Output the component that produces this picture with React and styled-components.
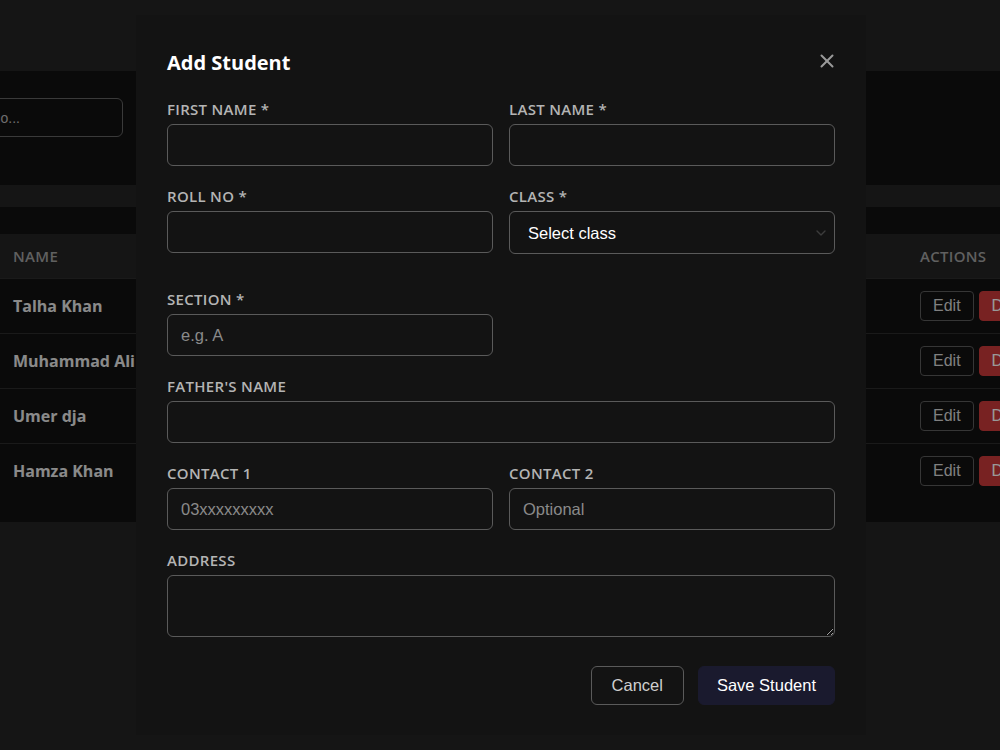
import React from 'react';
import styled, { createGlobalStyle } from 'styled-components';
import { X, ChevronDown } from 'lucide-react';

// --- Global ---
const GlobalStyle = createGlobalStyle`
  * { box-sizing: border-box; }
  html, body {
    margin: 0;
    padding: 0;
    background: #232323;
    overflow: hidden;
    font-family: "Open Sans", "Noto Sans", sans-serif;
  }
`;

// --- Background page (dimmed behind the modal) ---
const Page = styled.div`
  width: 1256px;
  height: 750px;
  margin-left: -190px;
  padding-top: 71px;
  display: flex;
  flex-direction: column;
  gap: 22px;
`;

const SearchCard = styled.div`
  height: 114px;
  background: #111;
  padding: 27px 24px;
  display: flex;
  align-items: flex-start;
`;

const SearchInput = styled.input`
  width: 289px;
  height: 39px;
  padding: 0 13px;
  background: transparent;
  border: 1px solid #616161;
  border-radius: 6px;
  color: #eee;
  font-family: "Liberation Sans", Arial, sans-serif;
  font-size: 14px;

  &::placeholder {
    color: #b8b8b8;
  }
`;

const TableCard = styled.div`
  background: #111;
  padding: 27px 0 23px;
`;

const Row = styled.div`
  display: grid;
  grid-template-columns: 190px 300px 200px 200px 207px 159px;
  align-items: center;
  height: ${(p) => (p.$head ? '45px' : '55px')};
  background: ${(p) => (p.$head ? '#242424' : 'transparent')};
  border-bottom: 1px solid ${(p) => (p.$last ? 'transparent' : '#2c2c2c')};
`;

const Cell = styled.div`
  padding: 0 13px;
  white-space: nowrap;
  overflow: hidden;
  color: ${(p) => (p.$head ? '#a0a0a0' : '#e6e6e6')};
  font-size: ${(p) => (p.$head ? '15px' : '16px')};
  font-weight: ${(p) => (p.$head ? 600 : p.$bold ? 700 : 400)};
  letter-spacing: ${(p) => (p.$head ? '0.3px' : '0')};
  text-transform: ${(p) => (p.$head ? 'uppercase' : 'none')};
  display: flex;
  gap: 5px;
`;

const RowButton = styled.button`
  height: 30px;
  padding: 0 12px;
  border-radius: 4px;
  font-family: "Liberation Sans", Arial, sans-serif;
  font-size: 16px;
  color: ${(p) => (p.$danger ? '#fff' : '#d5d5d5')};
  background: ${(p) => (p.$danger ? '#c83a3a' : 'transparent')};
  border: 1px solid ${(p) => (p.$danger ? '#c83a3a' : '#5a5a5a')};
`;

// --- Modal ---
const ModalOverlay = styled.div`
  position: fixed;
  inset: 0;
  background-color: rgba(0, 0, 0, 0.4);
  display: flex;
  justify-content: center;
  align-items: center;
  z-index: 2000;
`;

const ModalContent = styled.div`
  width: 730px;
  margin-left: 2px;
  background: #131313;
  padding: 34px 31px 30px;
`;

const ModalHeader = styled.div`
  display: flex;
  justify-content: space-between;
  align-items: center;
  margin-bottom: 24px;
`;

const Title = styled.h2`
  margin: 0;
  font-size: 20px;
  line-height: 27px;
  font-weight: 700;
  color: #fff;
`;

const CloseButton = styled.button`
  background: none;
  border: none;
  padding: 0;
  margin: -3px -3px 0 0;
  color: #9a9a9a;
  display: flex;
  cursor: pointer;
`;

const Form = styled.form`
  display: flex;
  flex-direction: column;
  gap: 21px;
`;

const FieldRow = styled.div`
  display: grid;
  grid-template-columns: 1fr 1fr;
  gap: 16px;
  margin-top: ${(p) => (p.$spaced ? '15px' : '0')};
`;

const Field = styled.div`
  display: flex;
  flex-direction: column;
  grid-column: ${(p) => (p.$full ? '1 / -1' : 'auto')};
`;

const Label = styled.label`
  font-size: 15px;
  line-height: 19px;
  font-weight: 600;
  letter-spacing: 0.3px;
  text-transform: uppercase;
  color: #b4b4b4;
  margin-bottom: 5px;
`;

const inputBase = `
  width: 100%;
  background: transparent;
  border: 1px solid #5a5a5a;
  border-radius: 6px;
  color: #f0f0f0;
  font-family: "Liberation Sans", Arial, sans-serif;
  font-size: 16.5px;
  outline: none;

  &::placeholder {
    color: #8a8a8a;
  }
`;

const Input = styled.input`
  ${inputBase}
  height: 42px;
  padding: 0 13px;
`;

const TextArea = styled.textarea`
  ${inputBase}
  height: 62px;
  padding: 11px 13px;
  resize: vertical;
  display: block;
`;

const SelectWrap = styled.div`
  position: relative;
  display: flex;
`;

const Select = styled.select`
  ${inputBase}
  height: 43px;
  padding: 0 18px;
  appearance: none;
  color: #fff;
`;

const Chevron = styled(ChevronDown)`
  position: absolute;
  right: 6px;
  top: 14px;
  color: #3c3c3c;
  pointer-events: none;
`;

const Actions = styled.div`
  display: flex;
  justify-content: flex-end;
  gap: 14px;
  margin-top: 8px;
`;

const Button = styled.button`
  height: 39px;
  padding: 0 ${(p) => (p.$primary ? '18px' : '20px')};
  border-radius: 6px;
  font-family: "Liberation Sans", Arial, sans-serif;
  font-size: 16.5px;
  cursor: pointer;
  color: ${(p) => (p.$primary ? '#fff' : '#cfcfcf')};
  background: ${(p) => (p.$primary ? '#1a1a2e' : 'transparent')};
  border: 1px solid ${(p) => (p.$primary ? '#1a1a2e' : '#5a5a5a')};
`;

const students = [
  { roll: '101', name: 'Talha Khan', cls: '10', sec: 'A', contact: '03001234567' },
  { roll: '102', name: 'Muhammad Ali', cls: '9', sec: 'B', contact: '03111234567' },
  { roll: '103', name: 'Umer dja', cls: '8', sec: 'A', contact: '03211234567' },
  { roll: '104', name: 'Hamza Khan', cls: '10', sec: 'C', contact: '03331234567' },
];

const App = () => {
  return (
    <>
      <GlobalStyle />
      <Page>
        <SearchCard>
          <SearchInput placeholder="Search by name or roll no..." />
        </SearchCard>
        <TableCard>
          <Row $head>
            <Cell $head>Roll No</Cell>
            <Cell $head>Name</Cell>
            <Cell $head>Class</Cell>
            <Cell $head>Section</Cell>
            <Cell $head>Contact</Cell>
            <Cell $head>Actions</Cell>
          </Row>
          {students.map((s, i) => (
            <Row key={s.roll} $last={i === students.length - 1}>
              <Cell>{s.roll}</Cell>
              <Cell $bold>{s.name}</Cell>
              <Cell>{s.cls}</Cell>
              <Cell>{s.sec}</Cell>
              <Cell>{s.contact}</Cell>
              <Cell>
                <RowButton>Edit</RowButton>
                <RowButton $danger>Delete</RowButton>
              </Cell>
            </Row>
          ))}
        </TableCard>
      </Page>

      <ModalOverlay>
        <ModalContent>
          <ModalHeader>
            <Title>Add Student</Title>
            <CloseButton aria-label="Close">
              <X size={22} strokeWidth={2.2} />
            </CloseButton>
          </ModalHeader>
          <Form onSubmit={(e) => e.preventDefault()}>
            <FieldRow>
              <Field>
                <Label>First Name *</Label>
                <Input />
              </Field>
              <Field>
                <Label>Last Name *</Label>
                <Input />
              </Field>
            </FieldRow>
            <FieldRow>
              <Field>
                <Label>Roll No *</Label>
                <Input />
              </Field>
              <Field>
                <Label>Class *</Label>
                <SelectWrap>
                  <Select defaultValue="">
                    <option value="">Select class</option>
                  </Select>
                  <Chevron size={16} />
                </SelectWrap>
              </Field>
            </FieldRow>
            <FieldRow $spaced>
              <Field>
                <Label>Section *</Label>
                <Input placeholder="e.g. A" />
              </Field>
            </FieldRow>
            <FieldRow>
              <Field $full>
                <Label>Father's Name</Label>
                <Input />
              </Field>
            </FieldRow>
            <FieldRow>
              <Field>
                <Label>Contact 1</Label>
                <Input placeholder="03xxxxxxxxx" />
              </Field>
              <Field>
                <Label>Contact 2</Label>
                <Input placeholder="Optional" />
              </Field>
            </FieldRow>
            <FieldRow>
              <Field $full>
                <Label>Address</Label>
                <TextArea />
              </Field>
            </FieldRow>
            <Actions>
              <Button type="button">Cancel</Button>
              <Button type="submit" $primary>Save Student</Button>
            </Actions>
          </Form>
        </ModalContent>
      </ModalOverlay>
    </>
  );
};

export default App;
